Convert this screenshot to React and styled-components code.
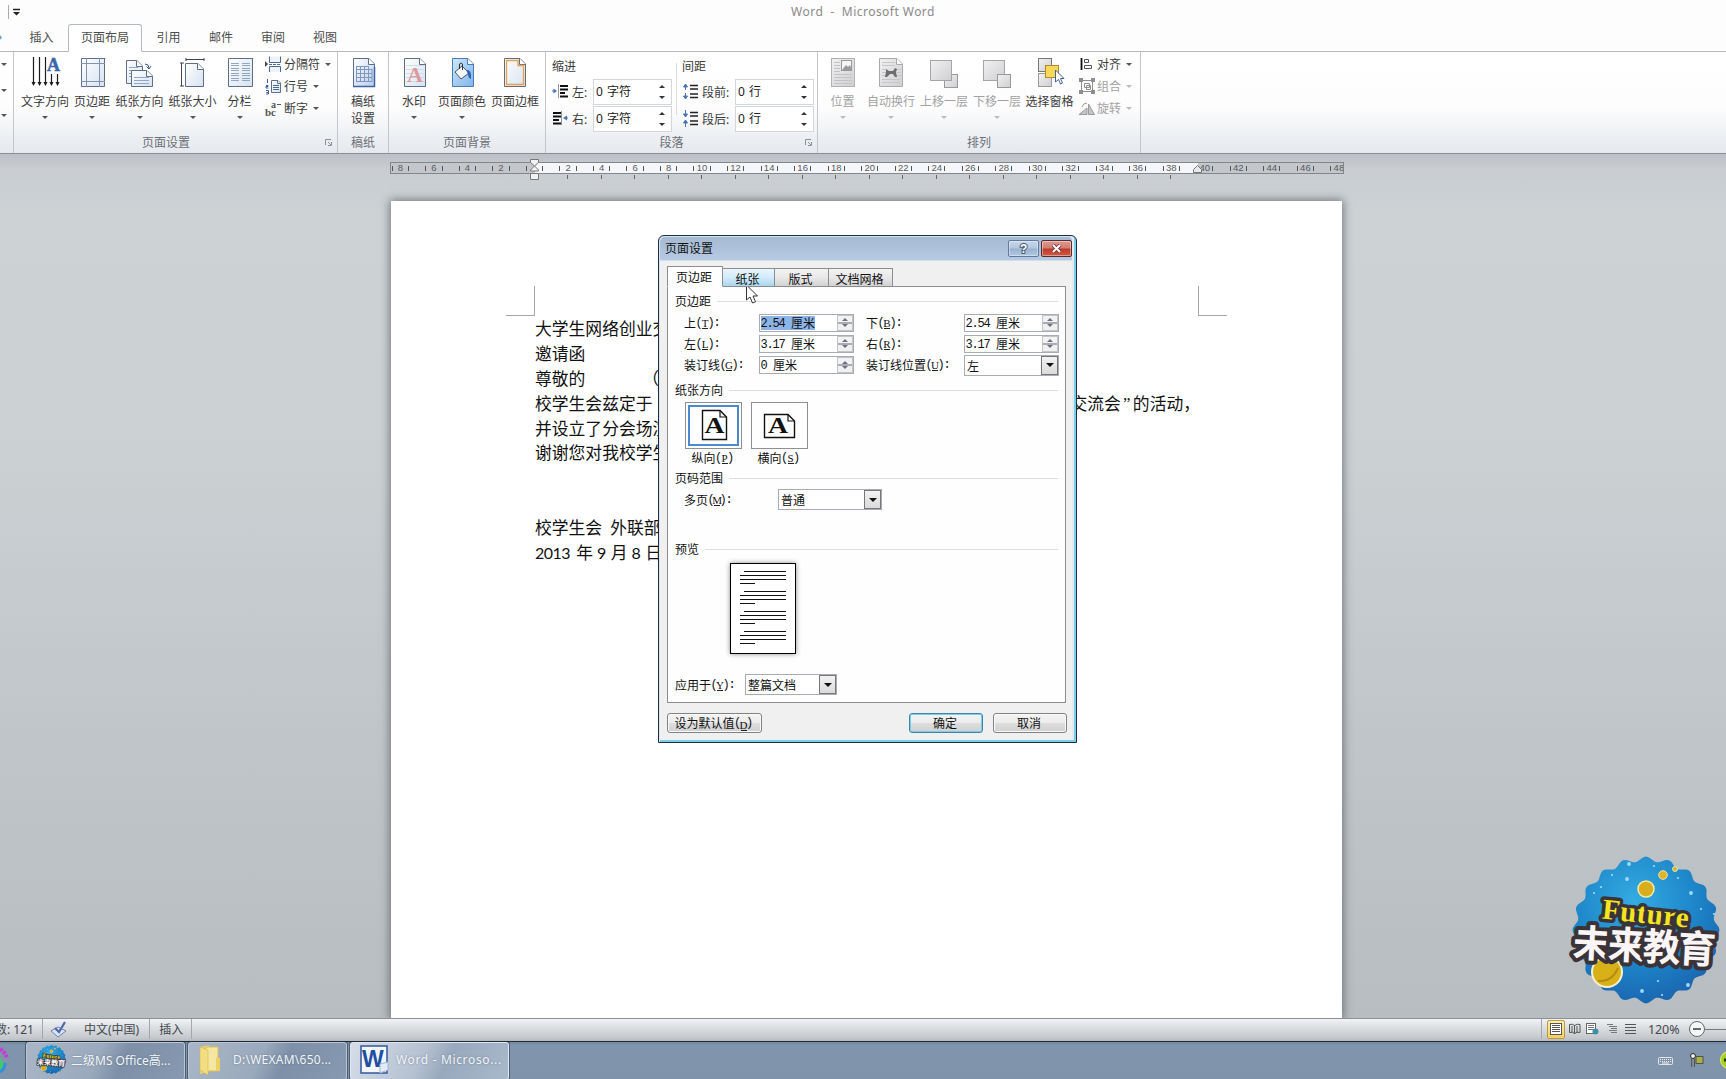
import React from "react";
import styled, { createGlobalStyle, css } from "styled-components";

const UI = `"Noto Sans", "Noto Sans CJK SC", sans-serif`;
const SONG = `"Noto Sans CJK SC", sans-serif`;

const Global = createGlobalStyle`
  * { box-sizing: border-box; }
  html, body { margin: 0; padding: 0; overflow: hidden; }
  body { font-family: ${UI}; font-size: 12px; color: #3b3b3b; }
  svg { display: block; flex: none; }
`;

const Screen = styled.div`
  width: 1726px; height: 1079px; display: flex; flex-direction: column;
  overflow: hidden; position: relative; background: #fdfdfd;
`;

/* ---------- title and tabs ---------- */
const TitleBar = styled.div`
  height: 24px; flex: none; display: flex; align-items: center; padding-left: 8px; position: relative;
`;
const TitleSep = styled.i`width: 1px; height: 14px; background: #aaa; margin-right: 4px;`;
const Title = styled.div`
  flex: 1; text-align: center; color: #8a8a8a; font-size: 12px; white-space: pre; letter-spacing: .46px; line-height: 22px;
  padding-right: 21px; height: 23px;
`;
const Tabs = styled.div`
  height: 28px; flex: none; display: flex; border-bottom: 1px solid #b4b9bf; position: relative;
`;
const TabStub = styled.div`width: 2px; margin-right: 13px; padding-top: 11px; overflow: hidden;`;
const Tab = styled.div`
  width: ${p => p.$w || 52}px; height: 28px; line-height: 27px; text-align: center; color: #4c4c4c;
  ${p => p.$active && css`
    border: 1px solid #b4b9bf; border-bottom-color: #fff; border-radius: 3px 3px 0 0; background: #fff; line-height: 25px;`}
`;

/* ---------- ribbon ---------- */
const Ribbon = styled.div`
  height: 102px; flex: none; display: flex; border-bottom: 1px solid #8b9097;
  background: linear-gradient(#ffffff 0%, #fdfdfe 55%, #eceff2 85%, #e5e9ee 100%);
`;
const Group = styled.div`
  width: ${p => p.$w}px; border-right: 1px solid #c3c7cc; display: flex; flex-direction: column; position: relative;
`;
const GroupBody = styled.div`height: 80px; display: flex; padding-left: ${p => p.$pad || 0}px;`;
const GroupLabel = styled.div`height: 21px; line-height: 21px; text-align: center; color: #6c7077; padding-right: ${p => p.$shift || 0}px;`;
const Launcher = styled.div`position: absolute; right: 4px; bottom: 6px;`;
const BigBtn = styled.div`
  width: ${p => p.$w}px; display: flex; flex-direction: column; align-items: center; padding-top: 5px;
  color: ${p => (p.$off ? "#a2a2a2" : "#3b3b3b")}; white-space: nowrap; flex: none;
`;
const BigText = styled.div`line-height: 17px; margin-top: 3.5px; text-align: center; white-space: pre; height: ${p => (p.$two ? 34 : 17)}px;`;
const Arrow = styled.i`
  width: 0; height: 0; border: 3px solid transparent; border-bottom: 0;
  border-top: 3px solid ${p => (p.$off ? "#bbb" : "#555")}; margin-top: ${p => p.$mt || 0}px;
`;
const SmallCol = styled.div`display: flex; flex-direction: column; padding-top: 3px; gap: 4px; margin-left: ${p => p.$ml || 0}px;`;
const SmallBtn = styled.div`
  height: 18px; display: flex; align-items: center; gap: 2px; white-space: nowrap; color: ${p => (p.$off ? "#a2a2a2" : "#3b3b3b")};
  & > i { margin-left: 3px; }
`;
const ParaCol = styled.div`width: ${p => p.$w}px; padding: 5px 0 0 ${p => p.$pad}px; flex: none;`;
const ParaHead = styled.div`line-height: 20px; height: 21px;`;
const ParaRow = styled.div`display: flex; align-items: center; height: 27px; white-space: nowrap;`;
const ParaName = styled.div`width: ${p => p.$w}px; margin-left: 3px; padding-top: 1px;`;
const Spin = styled.div`
  width: 79px; height: 26px; border: 1px solid #d3d6da; background: #fff; display: flex; align-items: center;
  justify-content: space-between; padding: 0 6px 2px 2px; color: #222; word-spacing: 1px;
`;
const SpinArrows = styled.div`display: flex; flex-direction: column; gap: 8px; padding-top: 3px;`;
const Up = styled.i`width: 0; height: 0; border: 3px solid transparent; border-top: 0; border-bottom: 3px solid ${p => p.$c || "#333"};`;
const Down = styled.i`width: 0; height: 0; border: 3px solid transparent; border-bottom: 0; border-top: 3px solid ${p => p.$c || "#333"};`;
const Rule = styled.i`width: 1px; height: 52px; background: #d9dce0; margin-top: 11px;`;

/* ---------- workspace ---------- */
const Work = styled.div`
  height: 864px; flex: none; position: relative; overflow: hidden;
  background: linear-gradient(#bcc0c4 0, #c9cdd1 14px, #cdd2d5 60px, #cbd0d3 300px, #bfc4c8 620px, #b7bdc0 100%);
  display: flex; flex-direction: column;
`;
const Ruler = styled.div`
  width: 954px; height: 12px; margin: 8px 0 0 390px; border: 1px solid #83878c; display: flex; overflow: hidden; flex: none;
  background: linear-gradient(90deg, #c3c7cb 0 144px, #f5f6fa 144px 807px, #c3c7cb 807px);
`;
const RulerCells = styled.div`display: flex; margin-left: -7.3px; flex: none;`;
const RulerCell = styled.div`
  width: 33.53px; height: 10px; display: flex; align-items: center; justify-content: center; position: relative;
  font: 9.5px/10px "Liberation Sans", sans-serif; color: #585b60; flex: none;
  background: linear-gradient(#555,#555) 25% 50% / 1px 5px no-repeat, linear-gradient(#555,#555) 75% 50% / 1px 5px no-repeat;
`;
const TabTicks = styled.div`display: flex; height: 6px; padding-top: 1px; margin-left: 550.9px; flex: none;`;
const TabTick = styled.div`width: 33.53px; flex: none; background: linear-gradient(#666,#666) 50% 0 / 1px 4px no-repeat;`;
const Marker = styled.div`position: absolute; left: ${p => p.$x}px; top: ${p => p.$y}px;`;
const Page = styled.div`
  width: 951px; height: 818px; margin: 21px 0 0 391px; background: #fff; flex: none;
  box-shadow: 0 0 9px 1px rgba(60,65,72,.65); padding: 85px 115px 0; display: flex; flex-direction: column;
`;
const Corners = styled.div`height: 30px; display: flex; justify-content: space-between; flex: none;`;
const Corner = styled.i`
  width: 29px; height: 30px; border-bottom: 1px solid #a6a6a6;
  ${p => (p.$left ? "border-right" : "border-left")}: 1px solid #a6a6a6;
`;
const Doc = styled.div`padding: 0 0 0 29px; display: flex; flex-direction: column; width: 780px;`;
const Line = styled.div`
  height: 24.9px; line-height: 25px; font-size: 16.8px; font-family: ${SONG}; color: #111; display: flex; white-space: pre;
`;
const Gap = styled.span`width: ${p => p.$w}px; flex: none;`;
const Latin = styled.span`font-family: Lato, sans-serif; font-size: 16px; letter-spacing: -.5px;`;
const Quote = styled.span`width: 12px; font-family: "Liberation Serif", serif; text-align: center; flex: none;`;

/* ---------- dialog ---------- */
const Dialog = styled.div`
  position: absolute; left: 658px; top: 235px; width: 419px; height: 508px; border: 1px solid #1d2b44;
  border-radius: 6px 6px 0 0; background: linear-gradient(#a5b9d1 0, #b5cbe3 24px, #f0f0f0 25px);
  display: flex; flex-direction: column; color: #111; font-family: ${SONG};
  box-shadow: inset 1px 1px 0 #d7e5f3, inset -2px -2px 0 #79cfe6, inset -4px 0 0 #e3e9f1;
  padding: 0 9px 0 8px;
`;
const DTitle = styled.div`height: 25px; display: flex; align-items: center; margin: 0 -5px 0 -2px; gap: 2px; flex: none;`;
const DName = styled.div`flex: 1; font-size: 12px; padding-bottom: 2px;`;
const CapBtn = styled.div`
  width: 31px; height: 17px; border: 1px solid ${p => (p.$red ? "#5a2a2e" : "#62799a")}; border-radius: 2px; display: flex; align-items: center;
  justify-content: center; box-shadow: inset 0 0 0 1px rgba(255,255,255,.4);
  background: ${p => (p.$red ? "linear-gradient(#dc9a90 0 , #d27b70 48%, #bd3a2a 52%, #cf5a47)" : "linear-gradient(#c4d6ea, #b2c8e0 48%, #98b2d1 52%, #b0c8e2)")};
`;
const DTabs = styled.div`display: flex; align-items: flex-end; height: 26px; flex: none; padding-top: 5px; position: relative; z-index: 1; margin-bottom: -1px;`;
const DTab = styled.div`
  width: ${p => p.$w}px; height: ${p => (p.$on ? 21 : 19)}px; line-height: 19px; text-align: center; border: 1px solid #8b8d91; border-left-width: ${p => (p.$on ? 1 : 0)}px;
  background: ${p => (p.$on ? "#fff" : p.$hot ? "linear-gradient(#e9f5fc, #d3ebf9 50%, #a9d6ee)" : "linear-gradient(#f3f3f3, #e8e8e8 50%, #d2d2d2)")};
  border-bottom-color: ${p => (p.$on ? "#fff" : "#8b8d91")}; padding-right: 2px;
`;
const Panel = styled.div`
  height: 417px; width: 399px; border: 1px solid #8b8d91; background: #fefefe; padding: 5px 7px 0 8px; display: flex; flex-direction: column; flex: none;
`;
const Section = styled.div`
  height: 18px; line-height: 18px; display: flex; align-items: center; gap: 6px; flex: none; margin: ${p => p.$mt || 0}px 0 0 -1px;
  &::after { content: ""; flex: 1; height: 1px; background: #dedede; }
`;
const FieldRow = styled.div`display: flex; align-items: center; height: ${p => p.$h || 21}px; padding-left: ${p => (p.$pad === undefined ? 9 : p.$pad)}px; flex: none; margin-top: ${p => p.$mt || 0}px;`;
const Name = styled.div`width: ${p => p.$w + 1}px; margin-left: -1px; white-space: nowrap; flex: none; line-height: 18px; display: flex;`;
const Half = styled.span`
  display: inline-flex; justify-content: center; width: 6px; height: 18px; font: 12px/18px "Liberation Mono", monospace;
`;
const Key = styled.span`
  display: inline-flex; justify-content: center; width: 6px; height: 15px; font: 11px/18px "Liberation Serif", serif;
  border-bottom: 1px solid #222;
`;
const Box = styled.div`
  width: ${p => p.$w}px; height: ${p => p.$h || 18}px; border: 1px solid #a7abb3; background: #fff; display: flex; align-items: center;
  justify-content: space-between; flex: none; margin-right: ${p => p.$mr || 0}px; padding-left: ${p => p.$pl || 1}px;
`;
const Val = styled.span`display: flex; line-height: 14px; height: 14px; background: ${p => (p.$sel ? "#8db4e6" : "none")};
  & ${Half} { height: 14px; line-height: 16px; }`;
const MiniSpin = styled.div`
  width: 16px; height: 16px; display: flex; flex-direction: column; align-items: center; justify-content: space-evenly;
  border: 1px solid #c2c4ca; background: linear-gradient(#f2f2f3 0 44%, #a9abb5 44% 54%, #f0f0f1 54%);
`;
const Drop = styled.div`
  width: 17px; height: 100%; border: 1px solid #777; background: linear-gradient(#f2f2f2, #dadada); display: flex; align-items: center; justify-content: center;
`;
const BigDown = styled.i`width: 0; height: 0; border: 4px solid transparent; border-bottom: 0; border-top: 4px solid #111;`;
const Orients = styled.div`display: flex; gap: 9px; padding: 3px 0 0 9px; flex: none;`;
const Orient = styled.div`width: 57px; display: flex; flex-direction: column; align-items: center;`;
const OrientBox = styled.div`
  width: 57px; height: 47px; border: 1px solid #8c8f94; padding: 2px; display: flex;
  & > div { flex: 1; display: flex; align-items: center; justify-content: center; border: 2px solid ${p => (p.$on ? "#4a8ad2" : "#fff")}; }
`;
const OrientName = styled.div`display: flex; line-height: 18px; padding-right: 2px;`;
const Preview = styled.div`
  width: 66px; height: 91px; border: 1px solid #000; margin: 5px 0 0 54px; background: #fff; box-shadow: 0 0 5px rgba(0,0,0,.45);
  padding: 7px 9px; display: flex; flex-direction: column; gap: 7px; flex: none;
`;
const Para = styled.div`height: 13px; display: flex; flex-direction: column; justify-content: space-between; flex: none;`;
const Stroke = styled.i`height: 1px; background: #111; width: ${p => p.$w}px; margin-left: ${p => p.$ml || 0}px;`;
const Footer = styled.div`display: flex; align-items: center; height: 38px; padding-top: 1px; margin-right: -1px;`;
const Btn = styled.div`
  width: ${p => p.$w}px; height: 20px; border: 1px solid ${p => (p.$def ? "#3d87a5" : "#7f8287")}; border-radius: 3px; display: flex; align-items: center; justify-content: center;
  line-height: 18px; background: linear-gradient(#f4f4f4, #ececec 48%, #dddddd 52%, #d0d0d0); margin-left: ${p => p.$ml || 0}px;
  box-shadow: inset 0 0 0 1px ${p => (p.$def ? "#7ccdea" : "#fafafa")}; padding: 1px 2px 0 0;
`;
const Pointer = styled.div`position: absolute; left: 745px; top: 284px;`;

/* ---------- status bar and taskbar ---------- */
const Status = styled.div`
  height: 23px; flex: none; border-top: 1px solid #8d9196; background: linear-gradient(#f0f2f4, #d9dcdf 45%, #c2c6ca 90%, #b5babf);
  display: flex; align-items: center; justify-content: space-between; color: #44484d; overflow: hidden; padding-bottom: 2px;
`;
const Side = styled.div`display: flex; align-items: center; height: 100%; white-space: nowrap;`;
const Bar = styled.i`width: 1px; height: 20px; background: #a3a8ad; margin: 0 ${p => p.$r}px 0 ${p => p.$l}px; flex: none;`;
const Count = styled.span`margin-left: -17px; font-size: 12px; width: 50px; text-align: right;`;
const ViewOn = styled.div`
  width: 18px; height: 19px; border: 1px solid #c09b3c; border-radius: 2px; background: linear-gradient(#fdedb4, #f7cf63); display: flex; align-items: center; justify-content: center;
`;
const Percent = styled.span`font-size: 12.5px; width: 33px; margin: 0 7px 0 12px; letter-spacing: -.1px;`;
const TaskBar = styled.div`
  height: 38px; flex: none; background: linear-gradient(#7187a0 0, #8095ad 3px, #7f93aa 100%); border-top: 1px solid #1f2a38;
  display: flex; justify-content: space-between; overflow: hidden;
`;
const TaskBtn = styled.div`
  width: 159px; height: 38px; border: 1px solid ${p => (p.$on ? "#dfe7f0" : "#bac6d4")}; border-radius: 3px; margin-right: 3px; color: #f3f6fa;
  display: flex; align-items: center; white-space: nowrap; padding: 0 0 2px 9px; font-size: 12px; box-shadow: 0 0 0 1px #4c5d72;
  background: ${p => (p.$on
    ? "linear-gradient(115deg, #d5dde8 0, #b4c0d0 45%, #99a9bd 60%, #a9b8cb)"
    : "linear-gradient(115deg, #a9b6c7 0, #9aa9bc 45%, #7d90a8 60%, #8799b0)")};
`;
const TaskText = styled.span`margin-left: ${p => p.$ml}px; letter-spacing: ${p => p.$ls || 0}px; text-shadow: 0 0 2px rgba(60,75,95,.5);`;
const Tray = styled.div`display: flex; align-items: center; gap: 16px; margin-right: -16px; padding-bottom: 2px;`;
const LogoSlot = styled.div`position: absolute; left: 1568px; top: 852px;`;

/* ---------- text helper: half-width cells for latin ---------- */
const Mix = ({ t }) => (
  <>{[...t].map((c, i) => (c.charCodeAt(0) < 128 ? <Half key={i}>{c === " " ? "\u00a0" : c}</Half> : <span key={i}>{c}</span>))}</>
);
const Label = ({ t, k, colon = true }) => (
  <>
    <Mix t={t} /><Half>(</Half><Key>{k}</Key><Half>)</Half>{colon && <Half>:</Half>}
  </>
);

/* ---------- icons ---------- */
const B = "#4d6a94";
const Svg = ({ w = 32, h = 32, children }) => (
  <svg width={w} height={h} viewBox={`0 0 ${w} ${h}`} fill="none">{children}</svg>
);
const Sheet = ({ x = 5, y = 1, w = 22, h = 29, fill = "url(#sheet)", stroke = "#5d6f88", fold = 6 }) => (
  <>
    <path d={`M${x + .5} ${y + .5}H${x + w - fold}L${x + w - .5} ${y + fold}V${y + h - .5}H${x + .5}Z`} fill={fill} stroke={stroke} />
    {fold > 0 && <path d={`M${x + w - fold - .5} ${y + .5}V${y + fold + .5}H${x + w - .5}`} fill="#fff" stroke={stroke} />}
  </>
);
const Defs = () => (
  <Marker as="svg" width="0" height="0" $x={0} $y={0}>
    <defs>
      <linearGradient id="sheet" x1="0" y1="0" x2="1" y2="1"><stop offset="0" stopColor="#fff" /><stop offset="1" stopColor="#d6e2f1" /></linearGradient>
      <linearGradient id="blue" x1="0" y1="0" x2="1" y2="1"><stop offset="0" stopColor="#cfe6fa" /><stop offset="1" stopColor="#7eb6e8" /></linearGradient>
      <linearGradient id="grey" x1="0" y1="0" x2="1" y2="1"><stop offset="0" stopColor="#f1f1f2" /><stop offset="1" stopColor="#cfcfd2" /></linearGradient>
      <linearGradient id="gridfill" x1="0" y1="0" x2="1" y2="1"><stop offset="0" stopColor="#fff" /><stop offset="1" stopColor="#b9ccec" /></linearGradient>
      <radialGradient id="sky" cx=".42" cy=".3" r=".75"><stop offset="0" stopColor="#34abe2" /><stop offset=".55" stopColor="#1d86c9" /><stop offset="1" stopColor="#1a62ad" /></radialGradient>
    </defs>
  </Marker>
);
const lines = (x1, x2, ys, c = "#8fa6c5") => <path d={ys.map(y => `M${x1} ${y}.5H${x2}`).join("")} stroke={c} />;

const IcDirection = () => (
  <Svg w={32}>
    <path d="M4.500 0V28M10.500 0V28M16.500 0V28M22.500 17V28M28.500 17V28" stroke="#1c1c1c" strokeWidth="1.200" />
    <path d="M2.500 25h4l-2 4zM8.500 25h4l-2 4zM14.500 25h4l-2 4zM20.500 25h4l-2 4zM26.500 25h4l-2 4z" fill="#1c1c1c" />
    <text x="18" y="14" fontFamily="Liberation Serif" fontWeight="bold" fontSize="18" fill="#3b65a8" stroke="#3b65a8" strokeWidth=".5">A</text>
  </Svg>
);
const IcMargins = () => (
  <Svg><Sheet x={5} w={24} fold={0} /><path d="M10.500 1V30M23.500 1V30M5 6.500H29M5 24.500H29" stroke="#8294ad" /></Svg>
);
const IcOrient = () => (
  <Svg w={30}>
    <Sheet x={1} y={3} w={17} h={24} />{lines(4, 13, [10, 13, 16, 19])}
    <path d="M20 7q4 0 4 4m-2.500-1.500l2.500 2.500 2-3" stroke="#3c5a90" />
    <Sheet x={6} y={13} w={22} h={17} />{lines(9, 24, [20, 23, 26])}
  </Svg>
);
const IcSize = () => (
  <Svg w={28}>
    <path d="M7 2.500H25M7 1v3M25 1v3M2.500 6V29M1 6h4M1 29h4" stroke="#444" />
    <Sheet x={6} y={6} w={19} h={24} />
  </Svg>
);
const IcColumns = () => (
  <Svg><Sheet x={4} w={25} fold={0} />{lines(7, 15, [6, 8, 11, 13, 16, 18, 21, 23])}{lines(18, 26, [6, 8, 11, 13, 16, 18, 21, 23])}</Svg>
);
const IcGrid = () => (
  <Svg w={26}><Sheet x={3} w={22} fill="url(#gridfill)" /><path d="M6 9.500H18M6 12.500H22M6 16.500H22M6 20.500H22M6 24.500H22M6.500 9V25M10.500 9V25M14.500 9V25M18.500 9V25M22 12V25" stroke="#7f96bd" /><path d="M3 29.500H24.500V10" stroke="#3f63a3" strokeWidth="1.500" /></Svg>
);
const IcWater = () => (
  <Svg w={26}><Sheet x={3} />{lines(5, 23, [8, 12, 16, 20, 24], "#d5dbe4")}<text x="6" y="25" fontFamily="Liberation Serif" fontWeight="bold" fontSize="22" fill="#dc9a9e">A</text></Svg>
);
const IcColor = () => (
  <Svg w={26}>
    <Sheet x={3} fill="url(#blue)" stroke="#4b7cb8" />
    <path d="M6 15l7-6 7 7-8 6z" fill="#f4f6f9" stroke="#4b5664" /><path d="M10.500 12V7q1.500-2 3 0v6" stroke="#333" />
    <path d="M17 13q6-1 5 9q-3-1-3-5z" fill="#2c62b5" />
  </Svg>
);
const IcBorder = () => (
  <Svg w={26}><Sheet x={2} stroke="#6f6a66" /><path d="M4.500 3.500H16V8.500H21.500V27.500H4.500Z" stroke="#dda25c" strokeWidth="1.300" /></Svg>
);
const IcPos = () => (
  <Svg w={26}><rect x="1.500" y="1.500" width="23" height="28" fill="url(#grey)" stroke="#b2b2b5" />{lines(4, 22, [17, 20, 23, 26], "#c3c3c5")}{lines(4, 10, [5, 8, 11, 14], "#c3c3c5")}<rect x="11.500" y="3.500" width="10" height="10" fill="#f5f5f5" stroke="#999" /><path d="M12 13l4-5 2 2 2-2 2 5z" fill="#999" /></Svg>
);
const IcWrap = () => (
  <Svg w={26}><Sheet x={1} w={24} fill="url(#grey)" stroke="#aaa" />{lines(4, 17, [5, 8], "#c6c6c8")}{lines(4, 8, [12, 15, 18], "#c6c6c8")}{lines(19, 23, [12, 15, 18], "#c6c6c8")}{lines(4, 22, [22, 25], "#c6c6c8")}<path d="M8 12l3 2h4l2-3 2 1-1 3 1 5h-2l-2-3h-3l-3 3h-2l1-5z" fill="#6e6e70" /></Svg>
);
const IcLayer = ({ back }) => (
  <Svg w={30}>
    {!back && <rect x="15.500" y="17.500" width="13" height="13" fill="url(#grey)" stroke="#999" />}
    <rect x="1.500" y="3.500" width="21" height="20" fill="url(#grey)" stroke="#a5a5a8" />
    {back && <rect x="15.500" y="17.500" width="13" height="13" fill="url(#grey)" stroke="#999" />}
  </Svg>
);
const IcPane = () => (
  <Svg w={30}>
    <rect x="3.500" y="1.500" width="13" height="13" fill="url(#grey)" stroke="#777" /><rect x="3.500" y="16.500" width="13" height="13" fill="url(#grey)" stroke="#999" />
    <rect x="10.500" y="8.500" width="13" height="12" fill="#f8d95a" stroke="#b28a2c" />
    <path d="M20.500 13v12l3-2.500 2 4.500 2-1-2-4.500h3.500z" fill="#fff" stroke="#44629a" />
  </Svg>
);
const IcBreak = () => (
  <Svg w={17} h={17}><path d="M4.500 .5V6.500H15.500V.5M4.500 16V10.500H15.500V16" stroke={B} fill="#eef3fa" /><path d="M4 8.500H16" stroke={B} strokeDasharray="3 1" /><path d="M0 5v6l3-3z" fill="#444" /></Svg>
);
const IcLineNo = () => (
  <Svg w={17} h={17}><Sheet x={6} y={2} w={10} h={13} fold={3} />{lines(8, 14, [7, 9, 11], B)}<path d="M2.500 1v4M1 7.500h2v1h-2v1.500h2.500M1 12.500h2.500v3.500h-2.500M1.500 14.500h2" stroke="#3d5fa0" /></Svg>
);
const IcHyph = () => (
  <Svg w={17} h={18}><text x="0" y="17" fontFamily="Liberation Serif" fontWeight="bold" fontSize="11" fill="#555">bc</text><text x="6" y="9" fontFamily="Liberation Serif" fontWeight="bold" fontSize="10" fill="#555">a</text><path d="M12 5.500h4" stroke="#555" /></Svg>
);
const IcAlign = () => <Svg w={16} h={16}><path d="M2.500 2V14" stroke="#111" strokeWidth="1.800" /><path d="M5.500 3.500h4v3h-4zM5.500 9.500h7v3h-7z" stroke="#555" fill="#fff" /></Svg>;
const IcGroup = () => <Svg w={16} h={16}><path d="M2.500 2.500h11v11h-11zM5.500 5.500h5v4h-5zM7.500 7.500h4v4h-4z" stroke="#8e8e8e" /><path d="M0 0h4v4H0zM12 0h4v4h-4zM0 12h4v4H0zM12 12h4v4h-4z" fill="#8e8e8e" /></Svg>;
const IcRotate = () => <Svg w={16} h={16}><path d="M0 14.500h8V8zM9.500 14.500V4l6 10.500z" fill="#c6c6c6" stroke="#9a9a9a" /><path d="M3 7q1-4 5-4" stroke="#9a9a9a" /></Svg>;
const IcIndent = ({ flip }) => (
  <Svg w={17} h={17}>
    {flip
      ? <><path d="M1 3h8M1 6.500h8M1 10h6M1 13.500h8" stroke="#111" strokeWidth="2" /><path d="M11 8l4-2.500v5z" fill="#4b74b8" /><path d="M14 8h2" stroke="#4b74b8" /><path d="M9.500 1.500v14" stroke="#333" strokeDasharray="1 1" /></>
      : <><path d="M8 3h8M8 6.500h8M8 10h5M8 13.500h8" stroke="#111" strokeWidth="2" /><path d="M5 8L1.500 5.500v5z" fill="#4b74b8" /><path d="M0 8h3" stroke="#4b74b8" /><path d="M6.500 1.500v14" stroke="#333" strokeDasharray="1 1" /></>}
  </Svg>
);
const IcSpace = ({ after }) => (
  <Svg w={17} h={17}>
    <path d="M8 2.500h8M8 6h8M8 11h8M8 14.500h8" stroke="#222" strokeWidth="1.500" />
    {after
      ? <path d="M3.500 0v5M1.500 4h4l-2 3zM3.500 17v-5M1.500 13h4l-2-3z" fill="#4b74b8" stroke="#4b74b8" />
      : <path d="M3.500 7V3M1.500 4h4l-2-3zM3.500 10v4M1.500 13h4l-2 3z" fill="#4b74b8" stroke="#4b74b8" />}
  </Svg>
);
const IcLaunch = () => <Svg w={8} h={8}><path d="M.5 6V.5H6M3 3l3 3M6.500 3v3.500H3" stroke="#8b9097" /></Svg>;

const LogoArt = ({ size = 152 }) => {
  const n = 20, pts = [];
  for (let i = 0; i <= 240; i++) {
    const a = (i / 240) * Math.PI * 2, r = 71 + 2.4 * Math.cos(n * a);
    pts.push(`${(82 + r * Math.cos(a)).toFixed(1)} ${(80 + r * Math.sin(a)).toFixed(1)}`);
  }
  return (
    <svg width={size} height={size} viewBox="4 4 156 152">
      <path d={`M${pts.join("L")}Z`} fill="url(#sky)" />
      {[[65, 14], [90, 16], [48, 25], [63, 29], [37, 37], [114, 28], [127, 43], [137, 59], [30, 43], [78, 141], [98, 145], [94, 131], [124, 135], [150, 64]].map(([x, y], i) => (
        <circle key={i} cx={x} cy={y} r={i % 3 ? 1.1 : 1.9} fill="#9fdcfb" />
      ))}
      <circle cx="82" cy="39" r="8" fill="#d9ae1c" stroke="#f7e9a6" strokeWidth="1.500" />
      <circle cx="99" cy="25" r="4.300" fill="#e0b32a" stroke="#f5e6a0" /><circle cx="111" cy="19" r="2.500" fill="#e0b32a" stroke="#cfe6c0" />
      <circle cx="43" cy="122" r="15" fill="#d8b118" stroke="#f7f1d2" strokeWidth="2" />
      <path d="M34 131q14 1 20-13" stroke="#b98b10" strokeWidth="2" fill="none" />
      <g transform="rotate(6 80 65)" fontFamily="Liberation Serif" fontWeight="bold" fontSize="29">
        <text x="38" y="73" fill="#f4e51f" stroke="#3a3438" strokeWidth="7" strokeLinejoin="round" paintOrder="stroke" textLength="87">Future</text>
      </g>
      <g transform="rotate(3 80 95)" fontFamily="Noto Sans CJK SC" fontWeight="700" fontSize="38">
        <text x="9" y="110" fill="#fbf5f7" stroke="#3a3438" strokeWidth="8" strokeLinejoin="round" paintOrder="stroke" textLength="143">未来教育</text>
      </g>
    </svg>
  );
};

const BigButton = ({ w, icon, text, arrow = true, off, two }) => (
  <BigBtn $w={w} $off={off}>{icon}<BigText $two={two}>{text}</BigText>{arrow && <Arrow $off={off} $mt={6} />}</BigBtn>
);
const SmallButton = ({ icon, text, off }) => <SmallBtn $off={off}>{icon}{text}<Arrow $off={off} /></SmallBtn>;
const RibbonSpin = ({ icon, name, w, value }) => (
  <ParaRow>{icon}<ParaName $w={w}>{name}</ParaName><Spin>{value}<SpinArrows><Up /><Down /></SpinArrows></Spin></ParaRow>
);
const CmBox = ({ v, sel, mr }) => (
  <Box $w={95} $mr={mr}><Val $sel={sel}><Mix t={v} /></Val><MiniSpin><Up $c="#6e7080" /><Down $c="#6e7080" /></MiniSpin></Box>
);
const Combo = ({ w, v, pl }) => <Box $w={w} $h={21} $pl={pl || 2}><span>{v}</span><Drop><BigDown /></Drop></Box>;

const rulerNums = [8, 6, 4, 2, "", ...Array.from({ length: 24 }, (_, i) => (i + 1) * 2)];

export default function App() {
  return (
    <Screen>
      <Global />
      <Defs />
      <TitleBar>
        <TitleSep />
        <Svg w={8} h={8}><path d="M0 1.500H7" stroke="#222" strokeWidth="1.500" /><path d="M0 4h7L3.500 7.500z" fill="#222" /></Svg>
        <Title>{"Word  -  Microsoft Word"}</Title>
      </TitleBar>
      <Tabs>
        <TabStub><Svg w={2} h={5}><path d="M0 0l2 2.500-2 2.500z" fill="#6aa6c8" /></Svg></TabStub>
        <Tab $w={53}>插入</Tab>
        <Tab $w={74} $active>页面布局</Tab>
        <Tab $w={53}>引用</Tab><Tab>邮件</Tab><Tab>审阅</Tab><Tab>视图</Tab>
      </Tabs>
      <Ribbon>
        <Group $w={14}>
          <SmallCol $ml={-2}>
            <SmallBtn><Arrow /></SmallBtn><SmallBtn><Arrow $mt={8} /></SmallBtn><SmallBtn><Arrow $mt={14} /></SmallBtn>
          </SmallCol>
        </Group>
        <Group $w={324}>
          <GroupBody $pad={5}>
            <BigButton w={52} icon={<IcDirection />} text="文字方向" />
            <BigButton w={42} icon={<IcMargins />} text="页边距" />
            <BigButton w={53} icon={<IcOrient />} text="纸张方向" />
            <BigButton w={53} icon={<IcSize />} text="纸张大小" />
            <BigButton w={41} icon={<IcColumns />} text="分栏" />
            <SmallCol $ml={5}>
              <SmallButton icon={<IcBreak />} text="分隔符" />
              <SmallButton icon={<IcLineNo />} text="行号" />
              <SmallButton icon={<IcHyph />} text="断字" />
            </SmallCol>
          </GroupBody>
          <GroupLabel $shift={19}>页面设置</GroupLabel>
          <Launcher><IcLaunch /></Launcher>
        </Group>
        <Group $w={51}>
          <GroupBody><BigButton w={50} icon={<IcGrid />} text={"稿纸\n设置"} two arrow={false} /></GroupBody>
          <GroupLabel>稿纸</GroupLabel>
        </Group>
        <Group $w={157}>
          <GroupBody $pad={1}>
            <BigButton w={48} icon={<IcWater />} text="水印" />
            <BigButton w={48} icon={<IcColor />} text="页面颜色" />
            <BigButton w={58} icon={<IcBorder />} text="页面边框" arrow={false} />
          </GroupBody>
          <GroupLabel>页面背景</GroupLabel>
        </Group>
        <Group $w={272}>
          <GroupBody>
            <ParaCol $w={130} $pad={6}>
              <ParaHead>缩进</ParaHead>
              <RibbonSpin icon={<IcIndent />} name="左:" w={21} value="0 字符" />
              <RibbonSpin icon={<IcIndent flip />} name="右:" w={21} value="0 字符" />
            </ParaCol>
            <Rule />
            <ParaCol $w={138} $pad={5}>
              <ParaHead>间距</ParaHead>
              <RibbonSpin icon={<IcSpace />} name="段前:" w={33} value="0 行" />
              <RibbonSpin icon={<IcSpace after />} name="段后:" w={33} value="0 行" />
            </ParaCol>
          </GroupBody>
          <GroupLabel $shift={20}>段落</GroupLabel>
          <Launcher><IcLaunch /></Launcher>
        </Group>
        <Group $w={323}>
          <GroupBody>
            <BigButton w={49} off icon={<IcPos />} text="位置" />
            <BigButton w={48} off icon={<IcWrap />} text="自动换行" />
            <BigButton w={58} off icon={<IcLayer />} text="上移一层" />
            <BigButton w={48} off icon={<IcLayer back />} text="下移一层" />
            <BigButton w={57} icon={<IcPane />} text="选择窗格" arrow={false} />
            <SmallCol $ml={1}>
              <SmallButton icon={<IcAlign />} text="对齐" />
              <SmallButton icon={<IcGroup />} text="组合" off />
              <SmallButton icon={<IcRotate />} text="旋转" off />
            </SmallCol>
          </GroupBody>
          <GroupLabel>排列</GroupLabel>
        </Group>
      </Ribbon>

      <Work>
        <Ruler>
          <RulerCells>{rulerNums.map((n, i) => <RulerCell key={i}>{n}</RulerCell>)}</RulerCells>
        </Ruler>
        <TabTicks>{Array.from({ length: 19 }, (_, i) => <TabTick key={i} />)}</TabTicks>
        <Marker $x={530} $y={5}>
          <Svg w={9} h={21}><path d="M.5.5h8v3L4.500 7 .5 3.500zM4.500 7l4 4v1h-8v-1z" fill="#f2f2f2" stroke="#777" /><path d="M.5 14.500h8v6h-8z" fill="#f2f2f2" stroke="#777" /></Svg>
        </Marker>
        <Marker $x={1193} $y={10}><Svg w={9} h={9}><path d="M.5 8.500v-3l4-4 4 4v3z" fill="#e9e9ec" stroke="#777" /></Svg></Marker>
        <Page>
          <Corners><Corner $left /><Corner /></Corners>
          <Doc>
            <Line>大学生网络创业交</Line>
            <Line>邀请函</Line>
            <Line>尊敬的<Gap $w={57} />（</Line>
            <Line>校学生会兹定于<Gap $w={418} />交流会<Quote>”</Quote>的活动，</Line>
            <Line>并设立了分会场演</Line>
            <Line>谢谢您对我校学生</Line>
            <Line /><Line />
            <Line>校学生会<Gap $w={8} />外联部</Line>
            <Line><Latin>2013</Latin><Gap $w={6} />年<Gap $w={4} /><Latin>9</Latin><Gap $w={5} />月<Gap $w={4} /><Latin>8</Latin><Gap $w={5} />日</Line>
          </Doc>
        </Page>
      </Work>

      <Status>
        <Side>
          <Count>字数: 121</Count>
          <Bar $l={9} $r={7} />
          <Svg w={18} h={18}><path d="M1 11l7-4 8 4-8 6z" fill="#dbe3f3" stroke="#6f82ad" /><path d="M5 8l4 4 6-10" stroke="#4d69ae" strokeWidth="2.200" /></Svg>
          <Gap $w={16} />中文(中国)<Bar $l={10} $r={9} />插入<Bar $l={8} $r={0} />
        </Side>
        <Side>
          <Bar $l={0} $r={5} />
          <ViewOn><Svg w={12} h={12}><rect x=".5" y=".5" width="11" height="11" fill="#fff" stroke="#555" />{lines(2, 10, [2, 4, 6, 8], "#555")}</Svg></ViewOn>
          <Gap $w={4} />
          <Svg w={12} h={12}><path d="M.5 1.500q3-1 5 1 3-2 5.500-1v8q-3-1-5.500 1-2-2-5-1zM5.500 2v9M2 4h2M2 6h2M2 8h2M7 4h2M7 6h2M7 8h2" stroke="#555" /></Svg>
          <Gap $w={5} />
          <Svg w={13} h={12}><rect x=".5" y=".5" width="9" height="10" fill="#fff" stroke="#666" />{lines(2, 8, [2, 4, 6], "#777")}<circle cx="9.500" cy="8.500" r="3" fill="#3f8fa8" /></Svg>
          <Gap $w={8} />
          <Svg w={10} h={12}><path d="M0 1.500h6M2 3.500h8M4 5.500h6M2 7.500h8M4 9.500h6" stroke="#777" /></Svg>
          <Gap $w={8} />
          <Svg w={11} h={12}><path d="M0 1.500h11M0 4.500h11M0 7.500h11M0 10.500h11" stroke="#555" /></Svg>
          <Percent>120%</Percent>
          <Svg w={38} h={18}><path d="M17 9.500H38" stroke="#777" /><circle cx="9" cy="9" r="7.500" fill="#f6f7f8" stroke="#666" /><path d="M5 9h8" stroke="#444" strokeWidth="1.600" /></Svg>
        </Side>
      </Status>

      <TaskBar>
        <Side>
          <Gap $w={26}><Svg w={26} h={38}><path d="M0 7q5 3 7 9" stroke="#c63bd6" strokeWidth="4" strokeDasharray="3 1" /><path d="M0 16q6 4 2 14h-2z" fill="#46c56a" /><path d="M5 21q0 6-5 9" stroke="#2f8fe0" strokeWidth="3" /></Svg></Gap>
          <TaskBtn><LogoArt size={31} /><TaskText $ml={4}>二级MS Office高...</TaskText></TaskBtn>
          <TaskBtn>
            <Svg w={24} h={32}><path d="M2 3l9-2v27l-9 2z" fill="#e9cf6b" /><path d="M8 3h12v24H8z" fill="#f6e7a0" stroke="#d9bf5c" /><path d="M2 3l8 3v25l-8-5z" fill="#f3dd83" stroke="#d4b850" strokeWidth=".6" /><path d="M18 14h4v13h-4z" fill="#eecf61" /></Svg>
            <TaskText $ml={11} $ls={.25}>D:\WEXAM\650...</TaskText>
          </TaskBtn>
          <TaskBtn $on>
            <Svg w={29} h={30}><rect x="1" y="1" width="26" height="27" fill="#f2f6fb" stroke="#31599b" strokeWidth="1.500" /><text x="2" y="22" fontFamily="Liberation Sans" fontWeight="bold" fontSize="23" fill="#1f4fa0">W</text><path d="M20 19l8-2v8l-8 3z" fill="#e3ebf6" stroke="#9fb3d2" /></Svg>
            <TaskText $ml={7} $ls={.65}>Word - Microso...</TaskText>
          </TaskBtn>
        </Side>
        <Tray>
          <Svg w={15} h={14}><rect x=".5" y="4.500" width="14" height="7" rx="1" fill="#8495a9" stroke="#dfe5ec" /><path d="M2 6.500h11M2 8.500h11" stroke="#e8ecf0" strokeDasharray="1 1" /><path d="M4 10h7" stroke="#e8ecf0" /></Svg>
          <Svg w={15} h={16}><circle cx="4" cy="4" r="2.500" stroke="#222" fill="#eee" /><path d="M4 7v8" stroke="#222" strokeWidth="3" /><path d="M4 7v8" stroke="#eee" /><rect x="7" y="4.500" width="7" height="7" fill="#a9b04b" stroke="#4d5640" /></Svg>
          <Svg w={22} h={18}><circle cx="9" cy="9" r="8.500" fill="#a6cf24" stroke="#e7ef72" /><path d="M9 4v10M4 9h10" stroke="#143c14" strokeWidth="3" /></Svg>
        </Tray>
      </TaskBar>

      <Dialog>
        <DTitle>
          <DName>页面设置</DName>
          <CapBtn><Svg w={12} h={13}><text x="2" y="11" fontFamily="Liberation Sans" fontWeight="bold" fontSize="12" fill="#fff" stroke="#4a5a72" strokeWidth="2" paintOrder="stroke">?</text></Svg></CapBtn>
          <CapBtn $red><Svg w={11} h={9}><path d="M2 1l7 7M9 1L2 8" stroke="#703038" strokeWidth="3.600" /><path d="M2 1l7 7M9 1L2 8" stroke="#fff" strokeWidth="2" /></Svg></CapBtn>
        </DTitle>
        <DTabs>
          <DTab $w={56} $on>页边距</DTab><DTab $w={52} $hot>纸张</DTab><DTab $w={54}>版式</DTab><DTab $w={64}>文档网格</DTab>
        </DTabs>
        <Panel>
          <Section>页边距</Section>
          <FieldRow $mt={2}><Name $w={74}><Label t="上" k="T" /></Name><CmBox v="2.54 厘米" sel mr={13} /><Name $w={97}><Label t="下" k="B" /></Name><CmBox v="2.54 厘米" /></FieldRow>
          <FieldRow><Name $w={74}><Label t="左" k="L" /></Name><CmBox v="3.17 厘米" mr={13} /><Name $w={97}><Label t="右" k="R" /></Name><CmBox v="3.17 厘米" /></FieldRow>
          <FieldRow $h={22}><Name $w={74}><Label t="装订线" k="G" /></Name><CmBox v="0 厘米" mr={13} /><Name $w={97}><Label t="装订线位置" k="U" /></Name><Combo w={95} v="左" /></FieldRow>
          <Section $mt={5}>纸张方向</Section>
          <Orients>
            <Orient>
              <OrientBox $on><div><Svg w={28} h={33}><path d="M2.500 1.500H20L26.500 8V30.500H2.500Z" fill="#fff" stroke="#111" strokeWidth="1.400" /><path d="M20 1.500V8H26.500" stroke="#111" strokeWidth="1.200" /><text x="4.500" y="24" fontFamily="Liberation Serif" fontWeight="bold" fontSize="24" textLength="20" lengthAdjust="spacingAndGlyphs" fill="#111">A</text></Svg></div></OrientBox>
              <OrientName><Label t="纵向" k="P" colon={false} /></OrientName>
            </Orient>
            <Orient>
              <OrientBox><div><Svg w={34} h={28}><path d="M1.500 2.500H25L31.500 9V25.500H1.500Z" fill="#fff" stroke="#111" strokeWidth="1.400" /><path d="M25 2.500V9H31.500" stroke="#111" strokeWidth="1.200" /><text x="5" y="21" fontFamily="Liberation Serif" fontWeight="bold" fontSize="23" textLength="20" lengthAdjust="spacingAndGlyphs" fill="#111">A</text></Svg></div></OrientBox>
              <OrientName><Label t="横向" k="S" colon={false} /></OrientName>
            </Orient>
          </Orients>
          <Section $mt={2}>页码范围</Section>
          <FieldRow $mt={2}><Name $w={93}><Label t="多页" k="M" /></Name><Combo w={104} v="普通" /></FieldRow>
          <Section $mt={30}>预览</Section>
          <Preview>
            {[0, 1, 2, 3].map(i => <Para key={i}><Stroke $w={42} $ml={4} /><Stroke $w={46} /><Stroke $w={46} /><Stroke $w={15} /></Para>)}
          </Preview>
          <FieldRow $pad={0} $mt={20}><Name $w={69}><Label t="应用于" k="Y" /></Name><Combo w={92} v="整篇文档" /></FieldRow>
        </Panel>
        <Footer>
          <Btn $w={95}><Label t="设为默认值" k="D" colon={false} /></Btn>
          <Btn $w={74} $ml={147} $def>确定</Btn>
          <Btn $w={74} $ml={10}>取消</Btn>
        </Footer>
      </Dialog>
      <Pointer><Svg w={14} h={20}><path d="M1.500 1v15l3.500-3 2.500 6 3-1.200-2.500-5.800h4.500z" fill="#fff" stroke="#333" /></Svg></Pointer>
      <LogoSlot><LogoArt size={156} /></LogoSlot>
    </Screen>
  );
}
